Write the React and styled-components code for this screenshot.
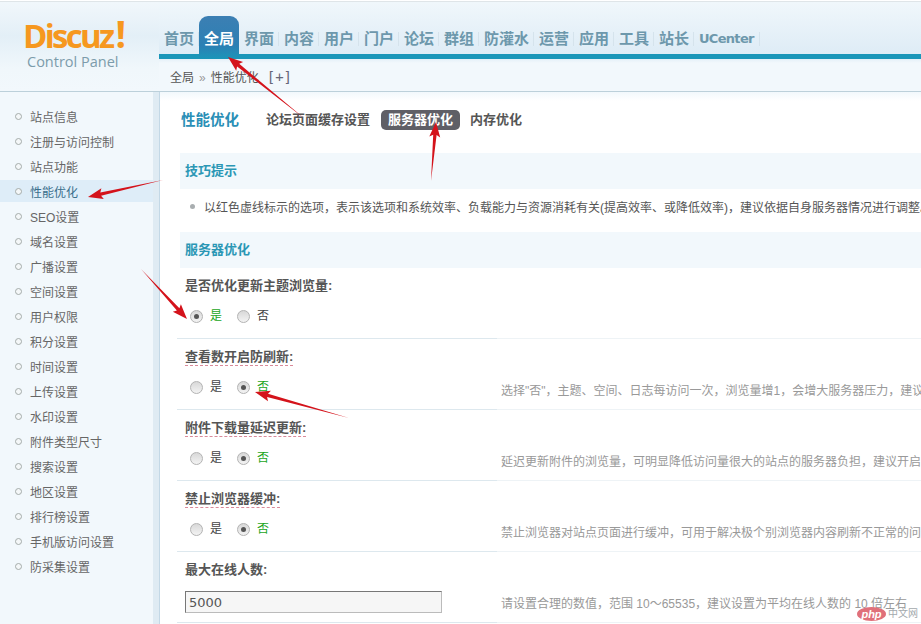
import React from 'react';
import styled, { createGlobalStyle } from 'styled-components';

const FONT = '"Liberation Sans", "Noto Sans CJK SC", sans-serif';

const navItems = ['首页', '全局', '界面', '内容', '用户', '门户', '论坛', '群组', '防灌水', '运营', '应用', '工具', '站长'];
const menuItems = ['站点信息', '注册与访问控制', '站点功能', '性能优化', 'SEO设置', '域名设置', '广播设置', '空间设置', '用户权限', '积分设置', '时间设置', '上传设置', '水印设置', '附件类型尺寸', '搜索设置', '地区设置', '排行榜设置', '手机版访问设置', '防采集设置'];

const settings = [
    { label: '是否优化更新主题浏览量:', value: 'yes' },
    { label: '查看数开启防刷新:', value: 'no', marked: true, hint: '选择"否"，主题、空间、日志每访问一次，浏览量增1，会增大服务器压力，建议选择"是"' },
    { label: '附件下载量延迟更新:', value: 'no', marked: true, hint: '延迟更新附件的浏览量，可明显降低访问量很大的站点的服务器负担，建议开启本功能' },
    { label: '禁止浏览器缓冲:', value: 'no', marked: true, hint: '禁止浏览器对站点页面进行缓冲，可用于解决极个别浏览器内容刷新不正常的问题' },
    { label: '最大在线人数:', input: '5000', hint: '请设置合理的数值，范围 10～65535，建议设置为平均在线人数的 10 倍左右' },
];

const arrows = [
    [305, 119, 228, 57],
    [431, 181, 436, 122],
    [163, 180, 88, 197],
    [141, 269, 187, 319],
    [349, 418, 255, 392],
];

// tapered red arrow from tail to tip
function arrowPath([x1, y1, x2, y2]) {
    const len = Math.hypot(x2 - x1, y2 - y1);
    const ux = (x2 - x1) / len;
    const uy = (y2 - y1) / len;
    const nx = -uy;
    const ny = ux;
    const bx = x2 - ux * 13;
    const by = y2 - uy * 13;
    const pt = (x, y) => `${x.toFixed(1)} ${y.toFixed(1)}`;
    return [
        'M', pt(x1, y1),
        'L', pt(bx + nx * 1.7, by + ny * 1.7),
        'L', pt(bx + nx * 5.5 - ux * 2, by + ny * 5.5 - uy * 2),
        'L', pt(x2, y2),
        'L', pt(bx - nx * 5.5 - ux * 2, by - ny * 5.5 - uy * 2),
        'L', pt(bx - nx * 1.7, by - ny * 1.7),
        'Z',
    ].join(' ');
}

const Global = createGlobalStyle`
    html, body { margin: 0; padding: 0; height: 100%; overflow: hidden; background: #fff; }
    body { font: 12px/18px ${FONT}; color: #555; }
    #root { height: 100%; }
`;

const Page = styled.div`
    position: relative;
    width: 921px;
    height: 624px;
    overflow: hidden;
    padding-top: 2px;
    box-sizing: border-box;
    background: linear-gradient(#fff 1px, #dfe5e8 1px, #dfe5e8 2px, #fff 2px);
`;

const Header = styled.header`
    display: flex;
    height: 89px;
    border-bottom: 1px solid #bcd0da;
    background: #f2f8fc;
`;

const Logo = styled.div`
    width: 159px;
    flex: none;
    box-sizing: border-box;
    padding: 17px 0 0 23px;
    background: linear-gradient(#f1f7fb, #e3eff7 38%, #f0f7fb 75%, #f2f8fc);
`;

const Brand = styled.div`
    font: 700 33px/34px "Open Sans", sans-serif;
    letter-spacing: -2.7px;
    color: #f6981f;
`;

const Bang = styled.span`
    font-size: 37px;
    line-height: 0;
    margin-left: 3px;
`;

const Sub = styled.div`
    font: 400 14.5px/18px "Open Sans", sans-serif;
    color: #7c9cab;
    margin: 0 0 0 4px;
`;

const HeaderRight = styled.div`
    flex: 1;
    min-width: 0;
`;

const Nav = styled.nav`
    display: flex;
    align-items: flex-end;
    height: 52px;
    border-bottom: 5px solid #1a96b9;
    background: linear-gradient(#f0f7fb, #deecf6);
`;

const NavItem = styled.a`
    display: block;
    padding: 0 5px;
    width: ${p => p.$width || 'auto'};
    height: ${p => (p.$active ? '38px' : '14px')};
    margin-bottom: ${p => (p.$active ? '-5px' : '8px')};
    padding-bottom: ${p => (p.$active ? '5px' : '0')};
    line-height: ${p => (p.$active ? '45px' : '14px')};
    font-size: ${p => (p.$latin ? '13px' : '15px')};
    font-family: ${p => (p.$latin ? '"DejaVu Sans", sans-serif' : FONT)};
    font-weight: 700;
    letter-spacing: ${p => (p.$latin ? '-0.7px' : '0')};
    white-space: nowrap;
    color: ${p => (p.$active ? '#fff' : '#6d98ac')};
    border-right: ${p => (p.$active ? '0' : '1px solid #d5e3ec')};
    border-radius: ${p => (p.$active ? '9px 9px 0 0' : '0')};
    background: ${p => (p.$active ? 'linear-gradient(#3c7fb3, #2c80b4 70%, #1a96b9)' : 'none')};
`;

const Crumbs = styled.div`
    height: 32px;
    padding-left: 11px;
    line-height: 37px;
    color: #555;
    background: linear-gradient(#e4f0f8, #f2f8fc 4px);
`;

const Sep = styled.span`
    color: #999;
    margin: 0 5px;
`;

const Plus = styled.span`
    margin-left: 8px;
    font-family: "DejaVu Sans Mono", monospace;
    font-size: 14px;
    color: #667;
`;

const Body = styled.div`
    display: flex;
    height: 532px;
`;

const Side = styled.aside`
    width: 160px;
    flex: none;
    box-sizing: border-box;
    padding: 13px 6px 0 0;
    background: #f2f8fc;
    border-right: 1px solid #c3d8e6;
    box-shadow: inset -6px 0 0 #dfebf3;
`;

const MenuItem = styled.a`
    display: block;
    position: relative;
    height: 22px;
    margin-bottom: 3px;
    padding-left: 30px;
    line-height: 27px;
    white-space: nowrap;
    color: ${p => (p.$active ? '#3a6f8c' : '#666')};
    background: ${p => (p.$active ? '#deedf8' : 'none')};

    &::before {
        content: '';
        position: absolute;
        left: 15px;
        top: 8px;
        width: 5px;
        height: 5px;
        border-radius: 50%;
        border: 1px solid #a5acaa;
        background: #f4f7f8;
    }
`;

const Main = styled.main`
    flex: 1;
    min-width: 0;
    overflow: hidden;
    padding: 18px 0 0 17px;
    background: linear-gradient(#f2f8fc, #fff 9px);
`;

const TitleRow = styled.div`
    display: flex;
    align-items: center;
    gap: 3px;
    height: 20px;
    padding-left: 4px;
`;

const PageTitle = styled.h1`
    margin: 0 17px 0 0;
    font-size: 14.5px;
    line-height: 20px;
    font-weight: 700;
    color: #2a8fb6;
`;

const Tab = styled.a`
    display: block;
    margin-left: ${p => (p.$active ? '1px' : '0')};
    padding: 0 7px;
    height: 20px;
    line-height: 20px;
    border-radius: 5px;
    font-size: 13px;
    font-weight: 700;
    white-space: nowrap;
    color: ${p => (p.$active ? '#fff' : '#555')};
    background: ${p => (p.$active ? '#5f5f66' : 'none')};
`;

const Band = styled.h2`
    margin: ${p => p.$top}px 0 0 3px;
    padding-left: 5px;
    height: 36px;
    line-height: 36px;
    font-size: 13px;
    font-weight: 700;
    color: #2b97b5;
    background: #f2f8fc;
`;

const Tip = styled.div`
    position: relative;
    height: 43px;
    padding-left: 27px;
    line-height: 38px;
    white-space: nowrap;
    color: #555;

    &::before {
        content: '';
        position: absolute;
        left: 13px;
        top: 15px;
        width: 5px;
        height: 5px;
        border-radius: 50%;
        background: #a9aeb0;
    }
`;

const Row = styled.div`
    display: flex;
    height: 71px;
`;

const Left = styled.div`
    width: 320px;
    flex: none;
    box-sizing: border-box;
    padding: 9px 0 0 8px;
    border-bottom: 1px solid #dde8ee;
`;

const Right = styled.div`
    flex: 1;
    min-width: 0;
    box-sizing: border-box;
    padding: 43px 0 0 4px;
    border-bottom: 1px solid #eef3f6;
    color: #999;
    white-space: nowrap;
`;

const Label = styled.div`
    height: 18px;
`;

const LabelText = styled.span`
    display: inline-block;
    height: 17px;
    font-size: 13px;
    font-weight: 700;
    color: #555;
    border-bottom: ${p => (p.$marked ? '1px dashed #d98a9a' : '0')};
`;

const Options = styled.div`
    display: flex;
    align-items: center;
    height: 22px;
    margin: 10px 0 0 5px;
`;

const Option = styled.div`
    display: flex;
    align-items: center;
    width: 47px;
    color: ${p => (p.$checked ? '#1aa51a' : '#444')};
`;

const Radio = styled.span`
    position: relative;
    width: 11px;
    height: 11px;
    margin-right: 7px;
    flex: none;
    border-radius: 50%;
    border: 1px solid #b3b3b3;
    background: linear-gradient(#d8d8d8, #f3f3f3);

    &::after {
        content: ${p => (p.$checked ? "''" : 'none')};
        position: absolute;
        left: 3px;
        top: 3px;
        width: 5px;
        height: 5px;
        border-radius: 50%;
        background: #555;
    }
`;

const Field = styled.input`
    display: block;
    width: 257px;
    height: 22px;
    margin: 12px 0 0 0;
    padding: 0 3px;
    box-sizing: border-box;
    border: 1px solid #bbb;
    border-top-color: #777;
    border-left-color: #777;
    background: #f6f6f6;
    font: 13px "DejaVu Sans", sans-serif;
    color: #555;
    outline: none;
`;

const Overlay = styled.svg`
    position: absolute;
    left: 0;
    top: 0;
    pointer-events: none;
`;

const Watermark = styled.div`
    position: absolute;
    right: 3px;
    bottom: 3px;
    display: flex;
    align-items: center;
    gap: 2px;
`;

const PhpBadge = styled.span`
    display: block;
    width: 29px;
    height: 14px;
    border-radius: 50%;
    background: #e0707a;
    color: #fff;
    font: italic 700 11px/14px "Liberation Sans", sans-serif;
    text-align: center;
`;

const PhpText = styled.span`
    font-size: 10px;
    line-height: 14px;
    color: #a3a9ad;
`;

function navWidth(item) {
    if (item === '全局') return '30px';
    return item === '防灌水' ? '44px' : '29px';
}

export default function App() {
    return (
        <Page>
            <Global />
            <Header>
                <Logo>
                    <Brand>Discuz<Bang>!</Bang></Brand>
                    <Sub>Control Panel</Sub>
                </Logo>
                <HeaderRight>
                    <Nav>
                        {navItems.map(item => (
                            <NavItem key={item} $active={item === '全局'} $width={navWidth(item)}>{item}</NavItem>
                        ))}
                        <NavItem $latin>UCenter</NavItem>
                    </Nav>
                    <Crumbs>全局<Sep>»</Sep>性能优化<Plus>[+]</Plus></Crumbs>
                </HeaderRight>
            </Header>
            <Body>
                <Side>
                    {menuItems.map(item => (
                        <MenuItem key={item} $active={item === '性能优化'}>{item}</MenuItem>
                    ))}
                </Side>
                <Main>
                    <TitleRow>
                        <PageTitle>性能优化</PageTitle>
                        <Tab>论坛页面缓存设置</Tab>
                        <Tab $active>服务器优化</Tab>
                        <Tab>内存优化</Tab>
                    </TitleRow>
                    <Band $top={23}>技巧提示</Band>
                    <Tip>以红色虚线标示的选项，表示该选项和系统效率、负载能力与资源消耗有关(提高效率、或降低效率)，建议依据自身服务器情况进行调整。</Tip>
                    <Band $top={0}>服务器优化</Band>
                    {settings.map(row => (
                        <Row key={row.label}>
                            <Left>
                                <Label><LabelText $marked={row.marked}>{row.label}</LabelText></Label>
                                {row.input ? (
                                    <Field readOnly value={row.input} />
                                ) : (
                                    <Options>
                                        <Option $checked={row.value === 'yes'}><Radio $checked={row.value === 'yes'} />是</Option>
                                        <Option $checked={row.value === 'no'}><Radio $checked={row.value === 'no'} />否</Option>
                                    </Options>
                                )}
                            </Left>
                            <Right>{row.hint}</Right>
                        </Row>
                    ))}
                </Main>
            </Body>
            <Overlay width="921" height="624" viewBox="0 0 921 624">
                {arrows.map(a => <path key={a.join()} d={arrowPath(a)} fill="#d4131b" />)}
            </Overlay>
            <Watermark>
                <PhpBadge>php</PhpBadge>
                <PhpText>中文网</PhpText>
            </Watermark>
        </Page>
    );
}
